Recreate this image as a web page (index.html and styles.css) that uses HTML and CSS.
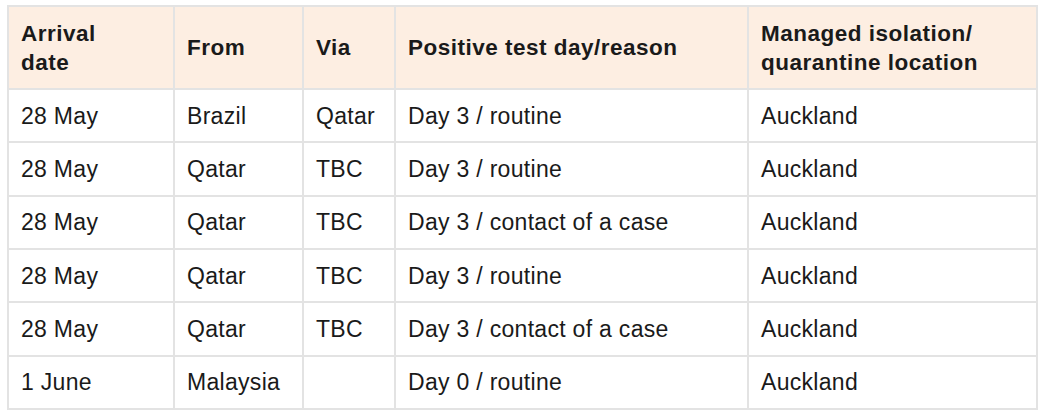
FILE: index.html
```html
<!DOCTYPE html>
<html lang="en">
<head>
<meta charset="utf-8">
<title>Cases</title>
<link rel="stylesheet" href="styles.css">
</head>
<body>
<table class="cases">
  <colgroup>
    <col class="c1"><col class="c2"><col class="c3"><col class="c4"><col class="c5">
  </colgroup>
  <thead>
    <tr>
      <th>Arrival<br>date</th>
      <th>From</th>
      <th>Via</th>
      <th>Positive test day/reason</th>
      <th>Managed isolation/<br>quarantine location</th>
    </tr>
  </thead>
  <tbody>
    <tr><td>28 May</td><td>Brazil</td><td>Qatar</td><td>Day 3 / routine</td><td>Auckland</td></tr>
    <tr><td>28 May</td><td>Qatar</td><td>TBC</td><td>Day 3 / routine</td><td>Auckland</td></tr>
    <tr><td>28 May</td><td>Qatar</td><td>TBC</td><td>Day 3 / contact of a case</td><td>Auckland</td></tr>
    <tr><td>28 May</td><td>Qatar</td><td>TBC</td><td>Day 3 / routine</td><td>Auckland</td></tr>
    <tr><td>28 May</td><td>Qatar</td><td>TBC</td><td>Day 3 / contact of a case</td><td>Auckland</td></tr>
    <tr><td>1 June</td><td>Malaysia</td><td></td><td>Day 0 / routine</td><td>Auckland</td></tr>
  </tbody>
</table>
</body>
</html>
```

FILE: styles.css
```css
html, body {
  margin: 0;
  padding: 0;
  background: #ffffff;
}
body {
  padding: 5px 0 0 7px;
  font-family: "Liberation Sans", Arial, sans-serif;
  color: #1a1a1a;
}
.cases {
  border-collapse: collapse;
  width: 1029px;
  table-layout: fixed;
  font-size: 23px;
}
.c1 { width: 166px; }
.c2 { width: 129px; }
.c3 { width: 92px; }
.c4 { width: 353px; }
.c5 { width: 289px; }
.cases th,
.cases td {
  border: 2px solid #e3e3e3;
  text-align: left;
  vertical-align: middle;
  padding: 0 0 0 12px;
}
.cases th {
  background: #fdeee2;
  font-weight: bold;
  font-size: 22.5px;
  line-height: 29px;
  height: 81px;
  letter-spacing: 0.5px;
}
.cases td {
  height: 51.33px;
  line-height: 24px;
  letter-spacing: 0.3px;
}
```
